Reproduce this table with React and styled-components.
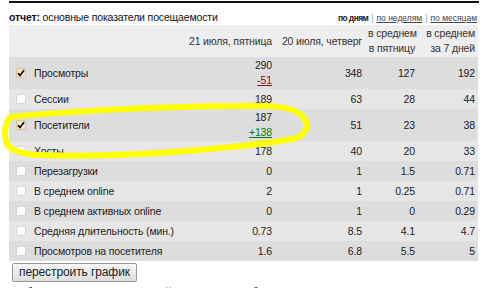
import React from "react";
import styled, { createGlobalStyle } from "styled-components";

const GlobalStyle = createGlobalStyle`
  html, body { margin: 0; padding: 0; background: #fff; }
  body { font-family: "Liberation Sans", Arial, sans-serif; color: #222; }
`;

const Page = styled.div`
  position: relative;
  width: 483px;
  height: 288px;
  overflow: hidden;
  padding: 1px 0 0 9px;
  box-sizing: border-box;
`;

const TopRule = styled.div`
  width: 470px;
  height: 2px;
  background: #111;
`;

const TitleBar = styled.div`
  display: flex;
  justify-content: space-between;
  align-items: baseline;
  width: 469px;
  height: 22px;
  padding-top: 7px;
  box-sizing: border-box;
  line-height: 14px;
`;

const Title = styled.div`
  font-size: 10.5px;
  letter-spacing: -0.15px;
  color: #111;
  b { font-weight: bold; }
`;

const Periods = styled.div`
  font-size: 8.5px;
  color: #333;
  display: flex;
  gap: 3px;
  align-items: baseline;
  padding-right: 1px;
`;

const Period = styled.span`
  font-weight: ${(p) => (p.$active ? "bold" : "normal")};
  letter-spacing: ${(p) => (p.$active ? "-0.6px" : "0")};
  text-decoration: ${(p) => (p.$active ? "none" : "underline")};
  color: ${(p) => (p.$active ? "#222" : "#444")};
`;

const Sep = styled.span`
  color: #8a9ab0;
`;

const Table = styled.table`
  width: 469px;
  border-collapse: collapse;
  table-layout: fixed;
  font-size: 10.5px;
  letter-spacing: -0.15px;
  line-height: 15px;
`;

const HeadRow = styled.tr`
  background: #eeeeee;
  height: 32px;
`;

const Th = styled.th`
  font-weight: normal;
  text-align: right;
  color: #333;
  padding: 1px 3px;
  white-space: nowrap;
  vertical-align: middle;
`;

const Row = styled.tr`
  background: ${(p) => (p.$odd ? "#dddddd" : "#e6e6e6")};
  height: 20px;
`;

const LabelCell = styled.td`
  padding: 1px 3px 1px 7px;
  white-space: nowrap;
  vertical-align: middle;
`;

const LabelInner = styled.div`
  display: flex;
  align-items: center;
  gap: 8px;
`;

const Box = styled.span`
  width: 10px;
  height: 10px;
  box-sizing: border-box;
  border-radius: 2px;
  border: 1px solid ${(p) => (p.$checked ? "#d8c48f" : "#d4d4d4")};
  background: ${(p) => (p.$checked ? "#f4e6c2" : "#ffffff")};
  display: inline-flex;
  align-items: center;
  justify-content: center;
  flex: none;
`;

const Num = styled.td`
  text-align: right;
  padding: 1px 3px;
  vertical-align: middle;
  white-space: nowrap;
  color: #222;
`;

const Delta = styled.div`
  color: ${(p) => (p.$up ? "#0a7a0a" : "#8b1010")};
  text-decoration: underline;
`;

const Button = styled.button`
  display: block;
  margin: 2px 0 0 3px;
  height: 19px;
  padding: 0 6px;
  font-family: "Liberation Sans", Arial, sans-serif;
  font-size: 12px;
  letter-spacing: -0.1px;
  color: #222;
  border: 1px solid #9a9a9a;
  border-radius: 2px;
  background: linear-gradient(#f6f6f6, #dedede);
  line-height: 17px;
`;

const Footer = styled.div`
  margin-top: 3px;
  font-size: 12px;
  line-height: 16px;
  white-space: nowrap;
  color: #222;
`;

const Scribble = styled.svg`
  position: absolute;
  left: 0;
  top: 0;
  pointer-events: none;
`;

const Check = () => (
  <svg width="8" height="8" viewBox="0 0 8 8">
    <path d="M1 4.2 L3 6.4 L7 1.2" fill="none" stroke="#000" strokeWidth="1.6" />
  </svg>
);

const rows = [
  { label: "Просмотры", checked: true, v: ["290", "348", "127", "192"], delta: { t: "-51", up: false } },
  { label: "Сессии", v: ["189", "63", "28", "44"] },
  { label: "Посетители", checked: true, v: ["187", "51", "23", "38"], delta: { t: "+138", up: true } },
  { label: "Хосты", v: ["178", "40", "20", "33"] },
  { label: "Перезагрузки", v: ["0", "1", "1.5", "0.71"] },
  { label: "В среднем online", v: ["2", "1", "0.25", "0.71"] },
  { label: "В среднем активных online", v: ["0", "1", "0", "0.29"] },
  { label: "Средняя длительность (мин.)", v: ["0.73", "8.5", "4.1", "4.7"] },
  { label: "Просмотров на посетителя", v: ["1.6", "6.8", "5.5", "5"] },
];

export default function App() {
  return (
    <>
      <GlobalStyle />
      <Page>
        <TopRule />
        <TitleBar>
          <Title>
            <b>отчет:</b> основные показатели посещаемости
          </Title>
          <Periods>
            <Period $active>по дням</Period>
            <Sep>|</Sep>
            <Period>по неделям</Period>
            <Sep>|</Sep>
            <Period>по месяцам</Period>
          </Periods>
        </TitleBar>
        <Table>
          <colgroup>
            <col style={{ width: 176 }} />
            <col style={{ width: 90 }} />
            <col style={{ width: 90 }} />
            <col style={{ width: 53 }} />
            <col style={{ width: 60 }} />
          </colgroup>
          <thead>
            <HeadRow>
              <Th />
              <Th>21 июля, пятница</Th>
              <Th>20 июля, четверг</Th>
              <Th>
                в среднем
                <br />в пятницу
              </Th>
              <Th>
                в среднем
                <br />
                за 7 дней
              </Th>
            </HeadRow>
          </thead>
          <tbody>
            {rows.map((r, i) => (
              <Row key={r.label} $odd={i % 2 === 0}>
                <LabelCell>
                  <LabelInner>
                    <Box $checked={r.checked}>{r.checked && <Check />}</Box>
                    {r.label}
                  </LabelInner>
                </LabelCell>
                <Num>
                  {r.v[0]}
                  {r.delta && <Delta $up={r.delta.up}>{r.delta.t}</Delta>}
                </Num>
                <Num>{r.v[1]}</Num>
                <Num>{r.v[2]}</Num>
                <Num>{r.v[3]}</Num>
              </Row>
            ))}
          </tbody>
        </Table>
        <Button>перестроить график</Button>
        <Footer>Выберите (до 5) показателей, для которых будет построен график</Footer>
        <Scribble width="483" height="288" viewBox="0 0 483 288">
          <path
            d="M10 117 C 60 112, 160 106, 240 106 C 270 105, 292 106, 302 116 C 310 125, 306 134, 296 138 C 270 144, 240 146, 200 150 C 150 154, 90 157, 40 155 C 20 154, 8 150, 6 142 C 4 133, 5 125, 8 120"
            fill="none"
            stroke="#ffff00"
            strokeWidth="6"
            strokeLinecap="round"
          />
        </Scribble>
      </Page>
    </>
  );
}
